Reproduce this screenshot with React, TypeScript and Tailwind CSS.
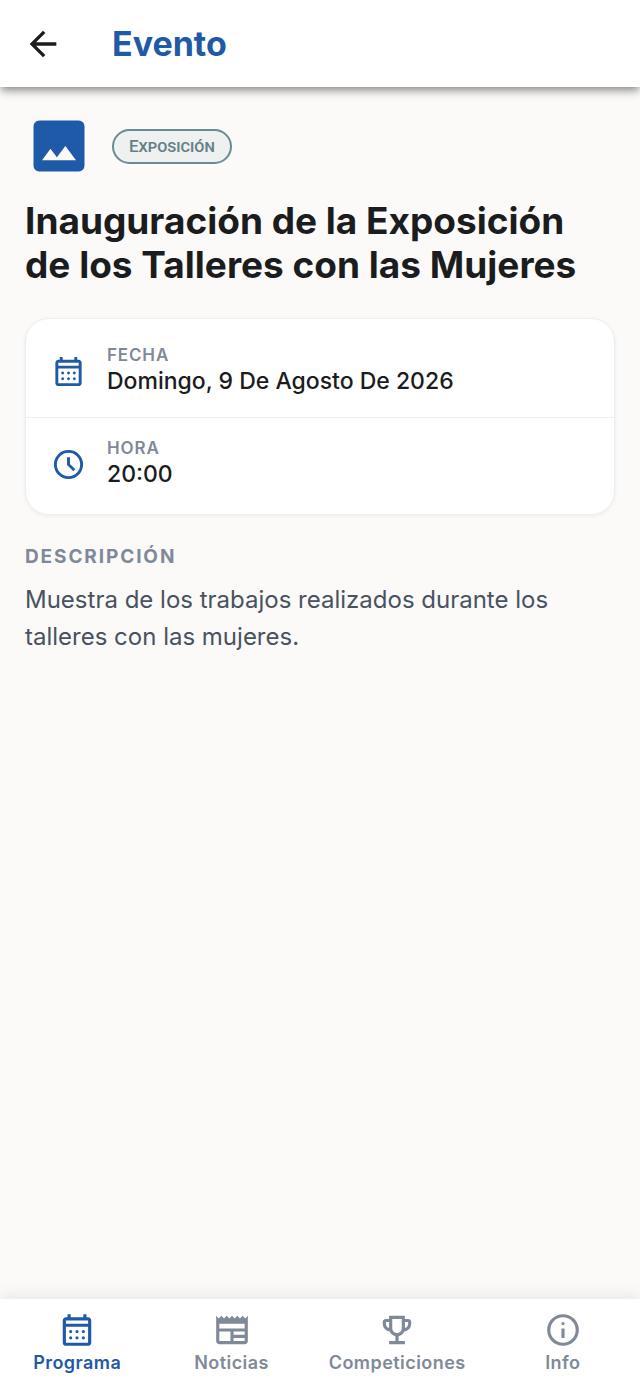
import type { ReactNode } from "react";

type IconProps = { path: string; className?: string };

function Icon({ path, className }: IconProps) {
  return (
    <svg viewBox="0 -960 960 960" fill="currentColor" className={className} aria-hidden="true">
      <path d={path} />
    </svg>
  );
}

const icons = {
  back: "m313-440 224 224-57 56-320-320 320-320 57 56-224 224h487v80H313Z",
  image:
    "M200-120q-33 0-56.5-23.5T120-200v-560q0-33 23.5-56.5T200-840h560q33 0 56.5 23.5T840-760v560q0 33-23.5 56.5T760-120H200Zm40-160h480L570-480 450-320l-90-120-120 160Z",
  calendar:
    "M200-80q-33 0-56.5-23.5T120-160v-560q0-33 23.5-56.5T200-800h40v-80h80v80h320v-80h80v80h40q33 0 56.5 23.5T840-720v560q0 33-23.5 56.5T760-80H200Zm0-80h560v-400H200v400Zm0-480h560v-80H200v80Zm280 240q-17 0-28.5-11.5T440-440q0-17 11.5-28.5T480-480q17 0 28.5 11.5T520-440q0 17-11.5 28.5T480-400Zm-160 0q-17 0-28.5-11.5T280-440q0-17 11.5-28.5T320-480q17 0 28.5 11.5T360-440q0 17-11.5 28.5T320-400Zm320 0q-17 0-28.5-11.5T600-440q0-17 11.5-28.5T640-480q17 0 28.5 11.5T680-440q0 17-11.5 28.5T640-400ZM480-240q-17 0-28.5-11.5T440-280q0-17 11.5-28.5T480-320q17 0 28.5 11.5T520-280q0 17-11.5 28.5T480-240Zm-160 0q-17 0-28.5-11.5T280-280q0-17 11.5-28.5T320-320q17 0 28.5 11.5T360-280q0 17-11.5 28.5T320-240Zm320 0q-17 0-28.5-11.5T600-280q0-17 11.5-28.5T640-320q17 0 28.5 11.5T680-280q0 17-11.5 28.5T640-240Z",
  clock:
    "m612-292 56-56-148-148v-184h-80v216l172 172ZM480-80q-83 0-156-31.5T197-197q-54-54-85.5-127T80-480q0-83 31.5-156T197-763q54-54 127-85.5T480-880q83 0 156 31.5T763-763q54 54 85.5 127T880-480q0 83-31.5 156T763-197q-54 54-127 85.5T480-80Zm0-80q133 0 226.5-93.5T800-480q0-133-93.5-226.5T480-800q-133 0-226.5 93.5T160-480q0 133 93.5 226.5T480-160Z",
  news:
    "M160-120q-33 0-56.5-23.5T80-200v-640l67 67 66-67 67 67 67-67 66 67 67-67 67 67 66-67 67 67 67-67 66 67 67-67v640q0 33-23.5 56.5T800-120H160Zm0-80h280v-240H160v240Zm360 0h280v-80H520v80Zm0-160h280v-80H520v80ZM160-520h640v-120H160v120Z",
  trophy:
    "M280-120v-80h160v-124q-49-11-87.5-41.5T296-442q-75-9-125.5-65.5T120-640v-40q0-33 23.5-56.5T200-760h80v-80h400v80h80q33 0 56.5 23.5T840-680v40q0 76-50.5 132.5T664-442q-18 46-56.5 76.5T520-324v124h160v80H280Zm0-408v-152h-80v40q0 38 22 68.5t58 43.5Zm200 128q50 0 85-35t35-85v-240H360v240q0 50 35 85t85 35Zm200-128q36-13 58-43.5t22-68.5v-40h-80v152Z",
  info:
    "M440-280h80v-240h-80v240Zm40-320q17 0 28.5-11.5T520-640q0-17-11.5-28.5T480-680q-17 0-28.5 11.5T440-640q0 17 11.5 28.5T480-600Zm0 520q-83 0-156-31.5T197-197q-54-54-85.5-127T80-480q0-83 31.5-156T197-763q54-54 127-85.5T480-880q83 0 156 31.5T763-763q54 54 85.5 127T880-480q0 83-31.5 156T763-197q-54 54-127 85.5T480-80Zm0-80q134 0 227-93t93-227q0-134-93-227t-227-93q-134 0-227 93t-93 227q0 134 93 227t227 93Z",
};

const tabs = [
  { label: "Programa", icon: icons.calendar, active: true },
  { label: "Noticias", icon: icons.news, active: false },
  { label: "Competiciones", icon: icons.trophy, active: false },
  { label: "Info", icon: icons.info, active: false },
];

function DetailRow({ icon, label, children }: { icon: string; label: string; children: ReactNode }) {
  return (
    <div className="flex items-center gap-[21px] px-[25px] py-5">
      <Icon path={icon} className="size-[35px] shrink-0 text-[#1f5aa8]" />
      <div>
        <dt className="text-[17px] leading-5 font-semibold tracking-wider text-[#7f8998]">{label}</dt>
        <dd className="text-[23px] leading-8 font-medium">{children}</dd>
      </div>
    </div>
  );
}

export default function App() {
  return (
    <div className="flex min-h-screen flex-col bg-[#fbfaf8] font-['Inter',sans-serif] text-[#1b1c1e]">
      {/* Top bar */}
      <header className="z-10 flex h-[87px] items-center gap-[49px] bg-white px-[23px] shadow-[0_4px_8px_-1px_rgba(0,0,0,0.4),0_4px_12px_rgba(0,0,0,0.1)]">
        <button type="button" aria-label="Volver" className="size-10">
          <Icon path={icons.back} className="size-10" />
        </button>
        <span className="text-[34px] leading-10 font-bold text-[#1f5aa8]">Evento</span>
      </header>

      <main className="flex-1 px-[25px] pt-[25px]">
        <div className="flex items-center gap-[19px]">
          <Icon path={icons.image} className="size-[68px] text-[#1f5aa8]" />
          <span className="rounded-full border-2 border-[#6a8a94] bg-[#eff0f0] px-[15px] font-['Roboto',sans-serif] text-[17px] leading-[31px] font-medium text-[#648089] [font-variant-caps:small-caps]">
            Exposición
          </span>
        </div>

        <h1 className="mt-[19px] text-[37px] leading-[44px] font-bold text-balance">
          Inauguración de la Exposición de los Talleres con las Mujeres
        </h1>

        {/* Date and time */}
        <dl className="mt-[31px] divide-y divide-[#edeff1] rounded-3xl border border-[#edeff1] bg-white pt-1.5 pb-1 shadow-[0_1px_4px_rgba(0,0,0,0.06)]">
          <DetailRow icon={icons.calendar} label="FECHA">
            Domingo, 9 De Agosto De 2026
          </DetailRow>
          <DetailRow icon={icons.clock} label="HORA">
            20:00
          </DetailRow>
        </dl>

        <section className="mt-7">
          <h2 className="text-[19px] leading-7 font-bold tracking-widest text-[#7f8998]">DESCRIPCIÓN</h2>
          <p className="mt-2.5 text-2xl leading-[37px] text-[#485261]">
            Muestra de los trabajos realizados durante los talleres con las mujeres.
          </p>
        </section>
      </main>

      {/* Bottom navigation */}
      <nav className="flex h-[87px] bg-white shadow-[0_-2px_16px_rgba(0,0,0,0.09)]">
        {tabs.map((tab) => (
          <a
            key={tab.label}
            href="#"
            aria-current={tab.active ? "page" : undefined}
            className={`flex flex-1 flex-col items-center px-5 pt-3 ${
              tab.active ? "text-[#1f5aa8]" : "text-[#7f8998]"
            }`}
          >
            <Icon path={tab.icon} className="size-[38px]" />
            <span className="mt-0.5 text-lg leading-6 font-semibold tracking-wide">{tab.label}</span>
          </a>
        ))}
      </nav>
    </div>
  );
}
